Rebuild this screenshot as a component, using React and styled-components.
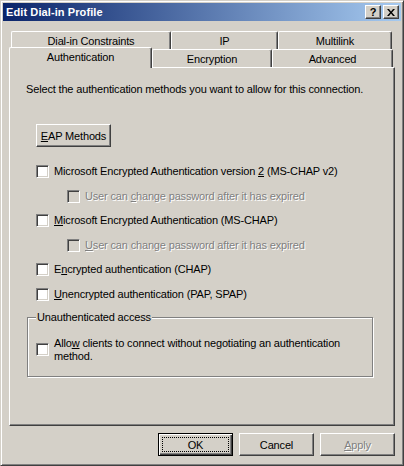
import React from 'react';
import styled, { createGlobalStyle } from 'styled-components';

const GlobalStyle = createGlobalStyle`
  html, body {
    margin: 0;
    padding: 0;
    background: #D4D0C8;
  }
  body {
    font-family: "Liberation Sans", Arial, sans-serif;
    font-size: 11px;
    letter-spacing: -0.16px;
    color: #000000;
  }
`;

const Window = styled.div`
  width: 404px;
  height: 466px;
  box-sizing: border-box;
  background: #D4D0C8;
  border: 1px solid;
  border-color: #D4D0C8 #404040 #404040 #D4D0C8;
  box-shadow: inset 1px 1px #FFFFFF, inset -1px -1px #808080;
  padding: 2px;
  display: flex;
  flex-direction: column;
`;

const TitleBar = styled.div`
  height: 18px;
  display: flex;
  align-items: center;
  padding: 0 2px 0 2px;
  background: linear-gradient(to right, #0A246A, #A6CAF0);
`;

const TitleText = styled.div`
  flex: 1;
  color: #FFFFFF;
  font-weight: bold;
  font-size: 11px;
  letter-spacing: 0.1px;
  padding-left: 1px;
`;

const TitleButton = styled.button`
  width: 16px;
  height: 14px;
  box-sizing: border-box;
  margin-left: ${p => (p.$gap ? '2px' : '0')};
  padding: 0;
  background: #D4D0C8;
  border: 1px solid;
  border-color: #FFFFFF #404040 #404040 #FFFFFF;
  box-shadow: inset -1px -1px #808080;
  display: flex;
  align-items: center;
  justify-content: center;
  font-family: "Liberation Sans", Arial, sans-serif;
  font-weight: bold;
  font-size: 11px;
  line-height: 1;
  color: #000000;
`;

const Body = styled.div`
  flex: 1;
  padding: 10px 6px 0 6px;
  display: flex;
  flex-direction: column;
`;

const TabRow = styled.div`
  display: flex;
  height: 18px;
  align-items: flex-end;
  padding-left: ${p => (p.$back ? '2px' : '0')};
`;

const Tab = styled.div`
  box-sizing: border-box;
  width: ${p => p.$w}px;
  height: ${p => (p.$active ? 21 : 18)}px;
  margin-bottom: ${p => (p.$active ? '-1px' : '0')};
  background: #D4D0C8;
  border-top: 1px solid #FFFFFF;
  border-left: 1px solid #FFFFFF;
  border-right: 1px solid #404040;
  border-radius: 2px 2px 0 0;
  box-shadow: inset -1px 0 #808080;
  display: flex;
  align-items: center;
  justify-content: center;
  padding-bottom: ${p => (p.$active ? '3px' : '0')};
  position: ${p => (p.$active ? 'relative' : 'static')};
  z-index: ${p => (p.$active ? 1 : 'auto')};
`;

const Panel = styled.div`
  box-sizing: border-box;
  height: 359px;
  border: 1px solid;
  border-color: #FFFFFF #404040 #404040 #FFFFFF;
  box-shadow: inset -1px -1px #808080;
  padding: 15px 0 0 16px;
  display: flex;
  flex-direction: column;
  align-items: flex-start;
`;

const Line = styled.div`
  line-height: 13px;
`;

const PushButton = styled.button`
  width: 75px;
  height: 23px;
  box-sizing: border-box;
  margin: ${p => p.$margin || '0'};
  padding: 0;
  background: #D4D0C8;
  font-family: "Liberation Sans", Arial, sans-serif;
  font-size: 11px;
  letter-spacing: -0.16px;
  color: ${p => (p.$disabled ? '#808080' : '#000000')};
  text-shadow: ${p => (p.$disabled ? '1px 1px #FFFFFF' : 'none')};
  border: 1px solid;
  border-color: ${p => (p.$default ? '#000000' : '#FFFFFF #404040 #404040 #FFFFFF')};
  box-shadow: ${p =>
    p.$default
      ? 'inset 1px 1px #FFFFFF, inset -1px -1px #404040, inset -2px -2px #808080'
      : 'inset -1px -1px #808080'};
  display: flex;
  align-items: center;
  justify-content: center;
`;

const FocusRect = styled.span`
  box-sizing: border-box;
  width: 67px;
  height: 15px;
  border: 1px dotted #000000;
  display: flex;
  align-items: center;
  justify-content: center;
`;

const CheckList = styled.div`
  margin: 18px 0 0 10px;
  display: flex;
  flex-direction: column;
  gap: 11.5px;
`;

const CheckRow = styled.label`
  display: flex;
  align-items: center;
  gap: 5px;
  height: ${p => (p.$tall ? 'auto' : '13px')};
  margin-left: ${p => (p.$indent ? '31px' : '0')};
  color: ${p => (p.$disabled ? '#808080' : '#000000')};
  text-shadow: ${p => (p.$disabled ? '1px 1px #FFFFFF' : 'none')};
  line-height: 13px;
`;

const Box = styled.span`
  flex: none;
  width: 13px;
  height: 13px;
  box-sizing: border-box;
  border: 1px solid;
  border-color: #808080 #FFFFFF #FFFFFF #808080;
  box-shadow: inset 1px 1px #404040, inset -1px -1px #D4D0C8;
  background: ${p => (p.$disabled ? '#D4D0C8' : '#FFFFFF')};
`;

const GroupBox = styled.div`
  box-sizing: border-box;
  width: 346px;
  margin: 16px 0 0 1px;
  padding: 0 8px 13px 8px;
  border: 1px solid #808080;
  box-shadow: inset 1px 1px #FFFFFF, 1px 1px #FFFFFF;
`;

const GroupLabel = styled.div`
  display: table;
  margin-top: -7px;
  margin-bottom: 13px;
  padding: 0 1px;
  line-height: 13px;
  background: #D4D0C8;
`;

const ButtonBar = styled.div`
  display: flex;
  justify-content: flex-end;
  gap: 6px;
  margin-top: 7px;
`;

const Key = styled.u`
  text-decoration: underline;
`;

const CloseGlyph = () => (
  <svg width="8" height="7" viewBox="0 0 8 7">
    <path d="M0 0h2l2 2.5L6 0h2L5 3.5 8 7H6L4 4.5 2 7H0l3-3.5z" fill="#000" />
  </svg>
);

const Check = ({ children, disabled, indent }) => (
  <CheckRow $disabled={disabled} $indent={indent}>
    <Box $disabled={disabled} />
    <span>{children}</span>
  </CheckRow>
);

export default function App() {
  return (
    <>
      <GlobalStyle />
      <Window>
        <TitleBar>
          <TitleText>Edit Dial-in Profile</TitleText>
          <TitleButton>?</TitleButton>
          <TitleButton $gap>
            <CloseGlyph />
          </TitleButton>
        </TitleBar>
        <Body>
          <TabRow $back>
            <Tab $w={160}>Dial-in Constraints</Tab>
            <Tab $w={107}>IP</Tab>
            <Tab $w={114}>Multilink</Tab>
          </TabRow>
          <TabRow>
            <Tab $w={143} $active>Authentication</Tab>
            <Tab $w={120}>Encryption</Tab>
            <Tab $w={121}>Advanced</Tab>
          </TabRow>
          <Panel>
            <Line>Select the authentication methods you want to allow for this connection.</Line>
            <PushButton $margin="28px 0 0 10px">
              <span><Key>E</Key>AP Methods</span>
            </PushButton>
            <CheckList>
              <Check>Microsoft Encrypted Authentication version <Key>2</Key> (MS-CHAP v2)</Check>
              <Check disabled indent>User can <Key>c</Key>hange password after it has expired</Check>
              <Check><Key>M</Key>icrosoft Encrypted Authentication (MS-CHAP)</Check>
              <Check disabled indent><Key>U</Key>ser can change password after it has expired</Check>
              <Check>E<Key>n</Key>crypted authentication (CHAP)</Check>
              <Check><Key>U</Key>nencrypted authentication (PAP, SPAP)</Check>
            </CheckList>
            <GroupBox>
              <GroupLabel>Unauthenticated access</GroupLabel>
              <CheckRow $tall>
                <Box />
                <span>Allo<Key>w</Key> clients to connect without negotiating an authentication<br />method.</span>
              </CheckRow>
            </GroupBox>
          </Panel>
          <ButtonBar>
            <PushButton $default>
              <FocusRect>OK</FocusRect>
            </PushButton>
            <PushButton>Cancel</PushButton>
            <PushButton $disabled><span><Key>A</Key>pply</span></PushButton>
          </ButtonBar>
        </Body>
      </Window>
    </>
  );
}
